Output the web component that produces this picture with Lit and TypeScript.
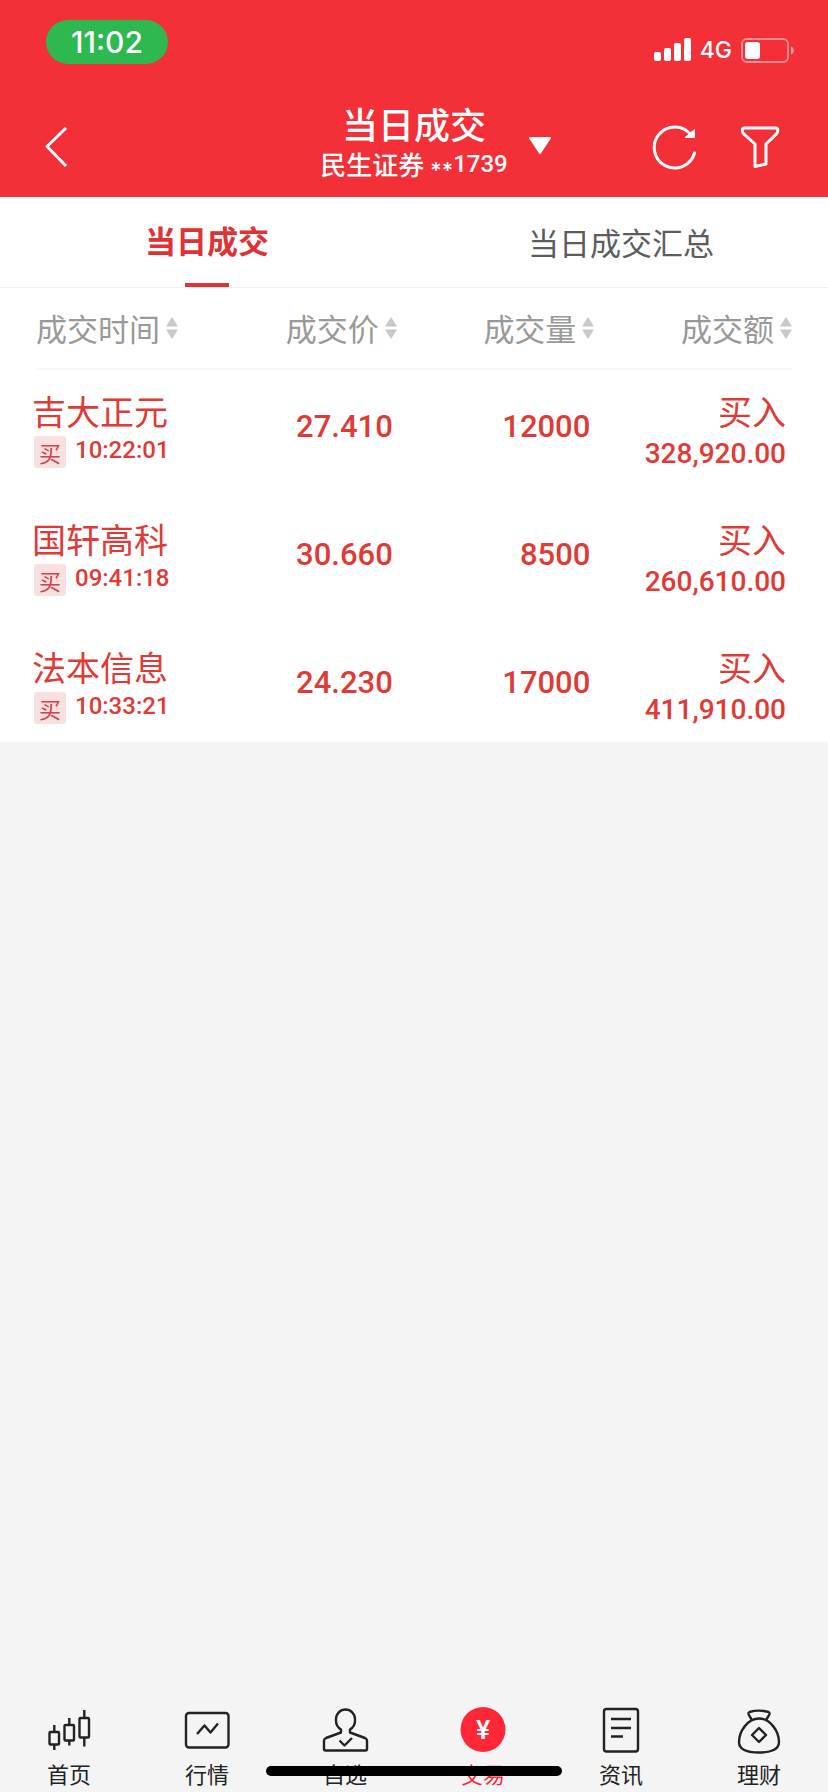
import { LitElement, html, svg, css, type TemplateResult } from "lit";
import { customElement, state } from "lit/decorators.js";
import { classMap } from "lit/directives/class-map.js";

interface Trade {
  name: string;
  time: string;
  price: string;
  volume: string;
  amount: string;
}

const TRADES: Trade[] = [
  { name: "吉大正元", time: "10:22:01", price: "27.410", volume: "12000", amount: "328,920.00" },
  { name: "国轩高科", time: "09:41:18", price: "30.660", volume: "8500", amount: "260,610.00" },
  { name: "法本信息", time: "10:33:21", price: "24.230", volume: "17000", amount: "411,910.00" },
];

const COLUMNS = ["成交时间", "成交价", "成交量", "成交额"];

const NAV: { label: string; icon: TemplateResult }[] = [
  {
    label: "首页",
    icon: svg`<rect x="4.500" y="27" width="9.500" height="12.500" rx="1"/><rect x="19.500" y="20" width="9.500" height="15.500" rx="1"/><rect x="34.500" y="13" width="9.500" height="19.500" rx="1"/>
      <path d="M9.300 20v7M9.300 39.500v5.500M24.300 13v7M24.300 35.500v5M39.300 5v8M39.300 32.500v9"/>`,
  },
  {
    label: "行情",
    icon: svg`<rect x="3" y="8" width="42.500" height="34.500" rx="3"/><path d="M14 29l7.500-8.500 6 7L35 18.500"/>`,
  },
  {
    label: "自选",
    icon: svg`<path d="M20 27.500v-3c-3-2-5-4.500-5-8.500v-2a9.500 9.500 0 0 1 19 0v2c0 4-2 6.500-5 8.500v3l15 5.500q2 .8 2 2.700v8.300q0 1.500-1.500 1.500h-40q-1.500 0-1.500-1.500v-8.300q0-1.900 2-2.700z"/><path d="M18.500 35.500l5 5 7.500-7.500"/>`,
  },
  {
    label: "交易",
    icon: svg`<circle class="coin" cx="24" cy="24.500" r="22.500"/><text class="yen" x="24" y="34" text-anchor="middle">¥</text>`,
  },
  {
    label: "资讯",
    icon: svg`<rect x="7" y="4" width="34" height="42.500" rx="2.500"/><path d="M14 14h20M14 23h20M14 31.500h12"/>`,
  },
  {
    label: "理财",
    icon: svg`<path d="M17 15.500c-1-3-3-4.500-3.500-6.500q-.3-1.500 1-2c6-1.700 13-1.700 19 0q1.300.5 1 2c-.5 2-2.500 3.500-3.500 6.500"/><path d="M24 13.500C13 13.500 4 26 4 37c0 8 9 10.500 20 10.500s20-2.500 20-10.500c0-11-9-23.500-20-23.500z"/><path d="M24 23l7 7-7 7-7-7z"/>`,
  },
];

@customElement("status-bar")
export class StatusBar extends LitElement {
  static styles = css`
    :host {
      display: flex;
      align-items: center;
      justify-content: space-between;
      height: 77px;
      padding: 10px 33px 10px 46px;
      color: #fff;
      font-family: Inter, sans-serif;
    }
    .clock {
      width: 122px;
      margin-bottom: 13px;
      border-radius: 22px;
      background: #2eb850;
      font-size: 30px;
      font-weight: 500;
      line-height: 44px;
      text-align: center;
    }
    .signals {
      display: flex;
      align-items: center;
      gap: 9px;
      margin-top: 3px;
      font-size: 23px;
      font-weight: 500;
      line-height: 26px;
    }
    .signals svg {
      display: block;
    }
  `;

  render() {
    return html`
      <div class="clock">11:02</div>
      <div class="signals">
        <svg width="37" height="24" fill="#fff" aria-hidden="true">
          <rect y="14" width="7" height="9" rx="2" />
          <rect x="10" y="10" width="7" height="13" rx="2" />
          <rect x="20" y="5" width="7" height="18" rx="2" />
          <rect x="30" width="7" height="23" rx="2" />
        </svg>
        <span>4G</span>
        <svg width="54" height="25" aria-hidden="true">
          <rect x="1" y="1" width="46" height="23" rx="5" fill="none" stroke="#fff" stroke-opacity=".45" stroke-width="2" />
          <rect x="4" y="4" width="15" height="17" rx="3" fill="#fff" />
          <path d="M50 8q3 2 3 4.500t-3 4.500z" fill="#fff" fill-opacity=".5" />
        </svg>
      </div>
    `;
  }
}

@customElement("title-bar")
export class TitleBar extends LitElement {
  static styles = css`
    :host {
      display: grid;
      grid-template-columns: 1fr auto 1fr;
      align-items: center;
      height: 100px;
      color: #fff;
      font-family: "Noto Sans CJK SC", sans-serif;
    }
    button {
      padding: 0;
      border: 0;
      background: none;
      color: inherit;
      cursor: pointer;
    }
    svg {
      display: block;
      fill: none;
      stroke: #fff;
      stroke-width: 3;
      stroke-linejoin: round;
    }
    .back {
      justify-self: start;
      margin-left: 43px;
    }
    .titles {
      padding-bottom: 4px;
      text-align: center;
    }
    h1 {
      margin: 0;
      font-size: 36px;
      font-weight: 500;
      line-height: 44px;
    }
    .account {
      display: flex;
      gap: 6px;
      margin: 0;
      font-size: 26px;
      font-weight: 500;
      line-height: 38px;
    }
    .number {
      font-family: Roboto, sans-serif;
      font-size: 24px;
    }
    .stars {
      font-family: Inter, sans-serif;
      font-size: 22px;
      vertical-align: sub;
    }
    .actions {
      display: flex;
      align-items: center;
      gap: 37px;
      padding: 0 44px 0 20px;
    }
    .switch {
      margin-right: auto;
    }
    .switch svg {
      fill: #fff;
      stroke-width: 2;
    }
    .arrow {
      fill: #fff;
      stroke-width: 1;
    }
  `;

  render() {
    return html`
      <button class="back" aria-label="返回">
        <svg width="26" height="44" viewBox="0 0 26 44"><path d="M23 3L4 21.500 23 41" /></svg>
      </button>
      <div class="titles">
        <h1>当日成交</h1>
        <p class="account"><span>民生证券</span><span class="number"><span class="stars">**</span>1739</span></p>
      </div>
      <div class="actions">
        <button class="switch" aria-label="切换账户">
          <svg width="24" height="20" viewBox="0 0 24 20"><path d="M2 1h20L12 16z" /></svg>
        </button>
        <button aria-label="刷新">
          <svg width="48" height="48" viewBox="0 0 48 48">
            <path d="M43.500 30A20.500 20.500 0 1 1 40 12" stroke-linecap="round" />
            <path class="arrow" d="M43.500 6.500v8h-9.500z" />
          </svg>
        </button>
        <button aria-label="筛选">
          <svg width="48" height="48" viewBox="0 0 48 48">
            <path d="M8.500 5h31q2.300 0 2.300 2 0 2.500-1.600 4.200L30 21v20l-11 2.500V21L8 11.200Q6.300 9.500 6.300 7q0-2 2.200-2z" />
          </svg>
        </button>
      </div>
    `;
  }
}

@customElement("trade-table")
export class TradeTable extends LitElement {
  static styles = css`
    :host {
      display: block;
      padding: 0 36px 0 32px;
      background: #fff;
      color: #df3a36;
      font-family: "Noto Sans CJK SC", sans-serif;
    }
    table {
      width: 100%;
      border-collapse: collapse;
      table-layout: fixed;
    }
    .first {
      width: 22%;
    }
    th,
    td {
      padding: 0;
      text-align: right;
      vertical-align: top;
      font-weight: 400;
    }
    th:first-child,
    td:first-child {
      text-align: left;
    }
    .head {
      height: 80px;
      border-bottom: 2px solid #f7f7f7;
      display: flex;
      justify-content: flex-end;
    }
    th:first-child .head {
      justify-content: flex-start;
      margin-left: 4px;
    }
    .sort {
      display: flex;
      align-items: center;
      gap: 6px;
      padding: 0;
      border: 0;
      background: none;
      color: #999;
      font-family: inherit;
      font-size: 31px;
      line-height: 40px;
      white-space: nowrap;
      cursor: pointer;
    }
    .sort svg {
      fill: #c8c8c8;
    }
    tbody tr {
      height: 128px;
    }
    tbody tr:last-child {
      height: 116px;
    }
    tbody td {
      padding-top: 21px;
    }
    .name,
    .side {
      font-size: 34px;
      line-height: 40px;
      white-space: nowrap;
    }
    .meta {
      display: flex;
      align-items: flex-start;
      gap: 9px;
      margin-top: 5px;
      padding-left: 2px;
    }
    .badge {
      width: 32px;
      border-radius: 3px;
      background: #f9dfe0;
      color: #c94450;
      font-size: 22px;
      line-height: 32px;
      text-align: center;
    }
    .time,
    .number,
    .amount {
      font-family: Roboto, sans-serif;
      font-weight: 500;
    }
    .time {
      font-size: 24px;
      line-height: 28px;
    }
    .number {
      padding-right: 4px;
      font-size: 31px;
      line-height: 72px;
    }
    .total {
      padding-right: 6px;
    }
    .amount {
      margin-top: 5px;
      font-size: 28px;
      line-height: 36px;
    }
  `;

  render() {
    return html`
      <table>
        <colgroup>
          <col class="first" />
          <col span="3" />
        </colgroup>
        <thead>
          <tr>
            ${COLUMNS.map(
              (label) => html`<th scope="col">
                <div class="head">
                  <button class="sort">
                    ${label}
                    <svg width="12" height="22" viewBox="0 0 12 22" aria-hidden="true"><path d="M6 0l6 9.500H0zM0 12.500h12L6 22z" /></svg>
                  </button>
                </div>
              </th>`
            )}
          </tr>
        </thead>
        <tbody>
          ${TRADES.map(
            (t) => html`<tr>
              <td>
                <div class="name">${t.name}</div>
                <div class="meta"><span class="badge">买</span><span class="time">${t.time}</span></div>
              </td>
              <td><div class="number">${t.price}</div></td>
              <td><div class="number">${t.volume}</div></td>
              <td class="total">
                <div class="side">买入</div>
                <div class="amount">${t.amount}</div>
              </td>
            </tr>`
          )}
        </tbody>
      </table>
    `;
  }
}

@customElement("bottom-nav")
export class BottomNav extends LitElement {
  static styles = css`
    :host {
      display: block;
      position: relative;
      padding: 12px 0 4px;
      font-family: "Noto Sans CJK SC", sans-serif;
    }
    nav {
      display: grid;
      grid-template-columns: repeat(6, 1fr);
    }
    a {
      display: flex;
      flex-direction: column;
      align-items: center;
      gap: 3px;
      color: #222;
      font-size: 22px;
      line-height: 30px;
      text-decoration: none;
    }
    a.active {
      color: #ff2637;
    }
    svg {
      display: block;
      fill: none;
      stroke: currentColor;
      stroke-width: 2.4;
      stroke-linejoin: round;
    }
    .coin {
      fill: #ff2637;
      stroke: none;
    }
    .yen {
      fill: #fff;
      stroke: none;
      font-family: Inter, sans-serif;
      font-size: 26px;
      font-weight: 600;
    }
    .indicator {
      position: absolute;
      bottom: 16px;
      left: 50%;
      width: 296px;
      height: 10px;
      border-radius: 5px;
      background: #000;
      transform: translateX(-50%);
    }
  `;

  render() {
    return html`
      <nav>
        ${NAV.map(
          (item) => html`<a href="#" class=${classMap({ active: item.label === "交易" })}>
            <svg width="48" height="50" viewBox="0 0 48 50" aria-hidden="true">${item.icon}</svg>
            ${item.label}
          </a>`
        )}
      </nav>
      <div class="indicator"></div>
    `;
  }
}

@customElement("app-root")
export class AppRoot extends LitElement {
  @state() private tab = 0;

  static styles = css`
    :host {
      display: flex;
      flex-direction: column;
      min-height: 100vh;
      background: #f4f4f4;
      font-family: "Noto Sans CJK SC", sans-serif;
    }
    header {
      background: #f32f37;
    }
    .tabs {
      display: grid;
      grid-template-columns: 1fr 1fr;
      height: 90px;
      border-bottom: 1px solid #f0f0f0;
      background: #fff;
    }
    .tab {
      display: flex;
      flex-direction: column;
      align-items: center;
      padding: 0;
      border: 0;
      background: none;
      color: #5c5c5c;
      font-family: inherit;
      font-size: 31px;
      line-height: 90px;
      cursor: pointer;
    }
    .tab.active {
      color: #df3236;
      font-weight: 700;
      line-height: 86px;
    }
    .tab.active::after {
      content: "";
      width: 44px;
      height: 4px;
      background: #e23237;
    }
    main {
      flex: 1;
    }
  `;

  render() {
    return html`
      <header>
        <status-bar></status-bar>
        <title-bar></title-bar>
      </header>
      <main>
        <div class="tabs" role="tablist">
          ${["当日成交", "当日成交汇总"].map(
            (label, i) => html`<button
              role="tab"
              class=${classMap({ tab: true, active: this.tab === i })}
              aria-selected=${this.tab === i}
              @click=${() => (this.tab = i)}
            >
              ${label}
            </button>`
          )}
        </div>
        <trade-table></trade-table>
      </main>
      <bottom-nav></bottom-nav>
    `;
  }
}
